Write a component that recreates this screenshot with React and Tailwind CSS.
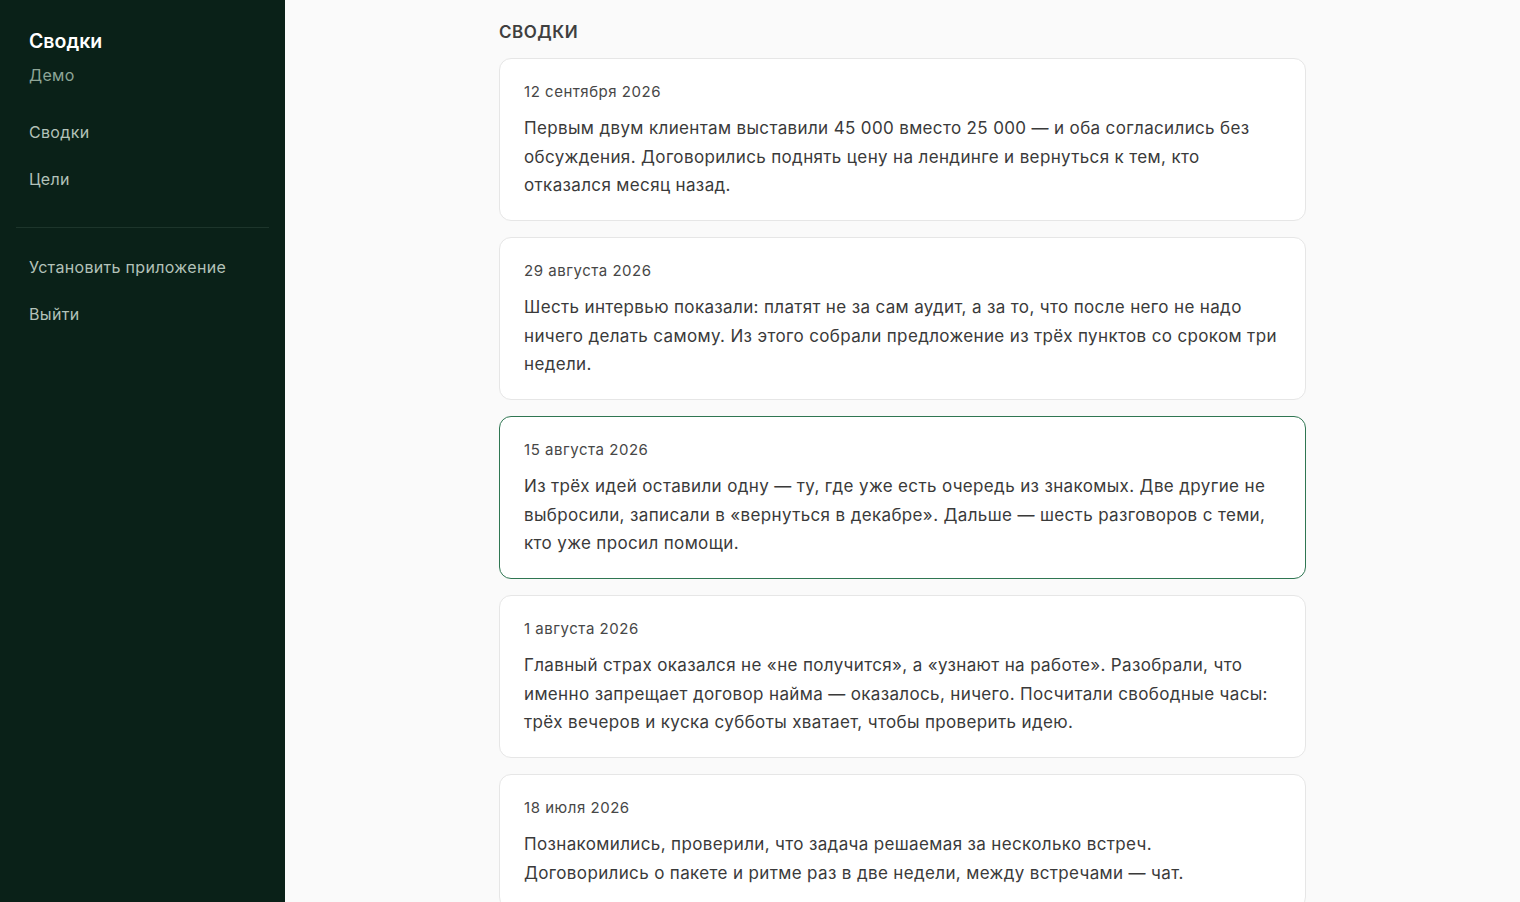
import React from "react";

const items = [
  {
    date: "12 сентября 2026",
    text: "Первым двум клиентам выставили 45 000 вместо 25 000 — и оба согласились без обсуждения. Договорились поднять цену на лендинге и вернуться к тем, кто отказался месяц назад.",
  },
  {
    date: "29 августа 2026",
    text: "Шесть интервью показали: платят не за сам аудит, а за то, что после него не надо ничего делать самому. Из этого собрали предложение из трёх пунктов со сроком три недели.",
  },
  {
    date: "15 августа 2026",
    text: "Из трёх идей оставили одну — ту, где уже есть очередь из знакомых. Две другие не выбросили, записали в «вернуться в декабре». Дальше — шесть разговоров с теми, кто уже просил помощи.",
    active: true,
  },
  {
    date: "1 августа 2026",
    text: "Главный страх оказался не «не получится», а «узнают на работе». Разобрали, что именно запрещает договор найма — оказалось, ничего. Посчитали свободные часы: трёх вечеров и куска субботы хватает, чтобы проверить идею.",
  },
  {
    date: "18 июля 2026",
    text: "Познакомились, проверили, что задача решаемая за несколько встреч. Договорились о пакете и ритме раз в две недели, между встречами — чат.",
  },
];

export default function App() {
  return (
    <div
      className="flex h-[902px] overflow-hidden bg-[#fafafa]"
      style={{ fontFamily: "Inter, 'Noto Sans', sans-serif" }}
    >
      <aside className="w-[285px] shrink-0 bg-[#0a2118] p-4 flex flex-col">
        <div className="px-[13px] pt-[11px]">
          <div className="text-[19.5px] leading-7 font-semibold text-white">Сводки</div>
          <div className="mt-2 text-[16px] leading-6 tracking-[0.02em] text-[#8ea597]">Демо</div>
        </div>
        <nav className="mt-[22px] flex flex-col">
          <a className="px-[13px] py-3 text-[16px] leading-[23px] tracking-[0.02em] text-[#b3c2b9]">Сводки</a>
          <a className="px-[13px] py-3 text-[16px] leading-[23px] tracking-[0.02em] text-[#b3c2b9]">Цели</a>
        </nav>
        <div className="mt-6 mb-4 h-px bg-[#1d352b]" />
        <nav className="flex flex-col">
          <a className="px-[13px] py-3 text-[16px] leading-[23px] tracking-[0.02em] text-[#b3c2b9]">Установить приложение</a>
          <a className="px-[13px] py-3 text-[16px] leading-[23px] tracking-[0.02em] text-[#b3c2b9]">Выйти</a>
        </nav>
      </aside>
      <main className="flex-1 overflow-hidden">
        <div className="mx-auto w-[807px] pt-[21px]">
          <h1 className="text-[17px] leading-[22px] font-semibold uppercase tracking-[0.03em] text-[#3f3f3f]">
            Сводки
          </h1>
          <div className="mt-[15px] flex flex-col gap-4">
            {items.map((it) => (
              <div
                key={it.date}
                className={
                  it.active
                    ? "rounded-xl border border-[#2f7652] bg-white px-6 pt-[22px] pb-[20.5px]"
                    : "rounded-xl border border-[#e6e6e6] bg-white px-6 pt-[22px] pb-[20.5px]"
                }
              >
                <div className="text-[15px] leading-[21px] tracking-[0.035em] text-[#474747]">{it.date}</div>
                <p className="mt-3 text-[17px] leading-[28.5px] tracking-[0.021em] text-[#3a3a3a]">{it.text}</p>
              </div>
            ))}
          </div>
        </div>
      </main>
    </div>
  );
}
